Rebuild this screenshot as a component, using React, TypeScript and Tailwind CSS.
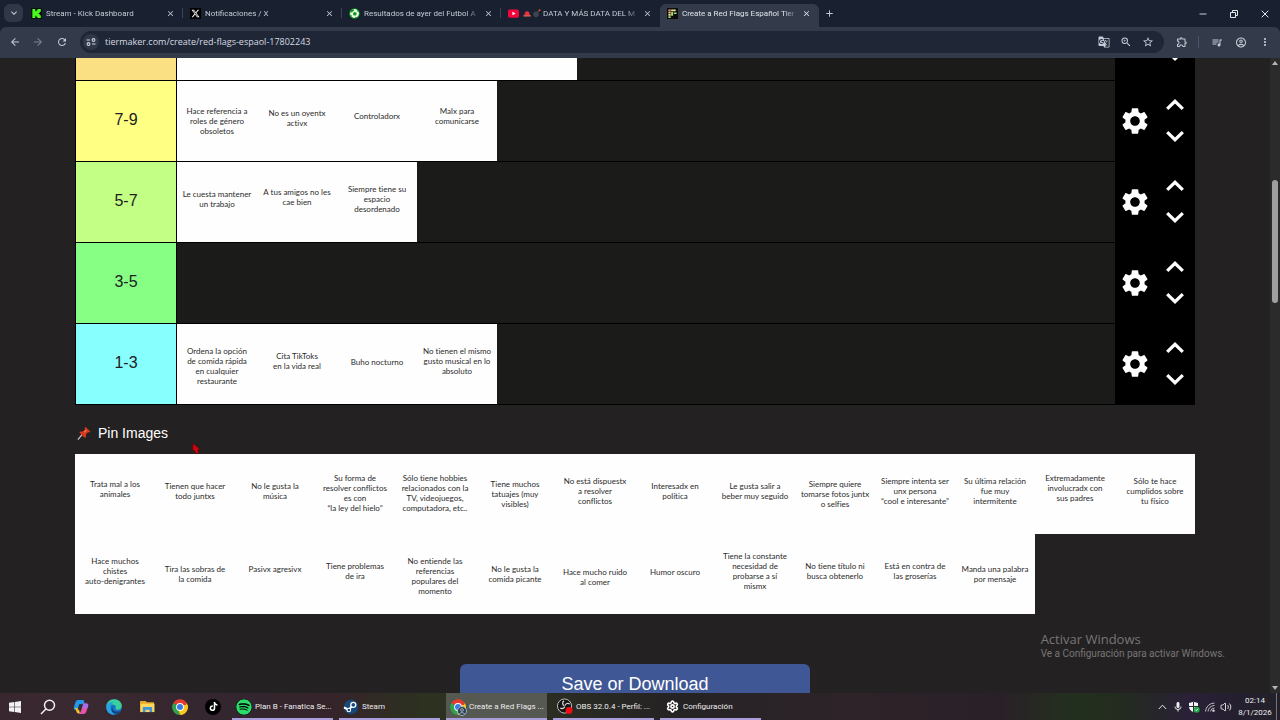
import type { ReactNode } from "react";
import {
  MdArrowBack,
  MdArrowForward,
  MdClose,
  MdGTranslate,
  MdKeyboardArrowDown,
  MdMic,
  MdMoreVert,
  MdOutlineAccountCircle,
  MdOutlineExtension,
  MdQueueMusic,
  MdRefresh,
  MdSettings,
  MdStarBorder,
  MdZoomIn,
  MdAdd,
} from "react-icons/md";
import { FaSpotify, FaTiktok, FaXTwitter } from "react-icons/fa6";
import { Settings, Volume2 } from "lucide-react";

const UI = "font-['Open_Sans','Noto_Sans',sans-serif]";
const UI_SMALL = "font-[Roboto,'Noto_Sans',sans-serif]";
const ARIAL = "font-['Liberation_Sans',Arial,sans-serif]";

/* Vertical start of the caption inside each 80px card. */
const START = {
  a: "pt-[17px]",
  b: "pt-[19px]",
  c: "pt-[22px]",
  d: "pt-[25px]",
  e: "pt-[27px]",
  f: "pt-[30px]",
  g: "pt-[33px]",
};

type Card = { lines: string[]; start: keyof typeof START };
type Tier = { label: string; color: string; cards: Card[] };

const card = (start: keyof typeof START, ...lines: string[]): Card => ({ start, lines });

const tiers: Tier[] = [
  { label: "", color: "bg-[#fbe083]", cards: [card("a"), card("a"), card("a"), card("a"), card("a")] },
  {
    label: "7-9",
    color: "bg-[#feff83]",
    cards: [
      card("d", "Hace referencia a", "roles de género", "obsoletos"),
      card("e", "No es un oyentx", "activx"),
      card("f", "Controladorx"),
      card("d", "Malx para", "comunicarse"),
    ],
  },
  {
    label: "5-7",
    color: "bg-[#c2ff84]",
    cards: [
      card("e", "Le cuesta mantener", "un trabajo"),
      card("d", "A tus amigos no les", "cae bien"),
      card("c", "Siempre tiene su", "espacio", "desordenado"),
    ],
  },
  { label: "3-5", color: "bg-[#86ff84]", cards: [] },
  {
    label: "1-3",
    color: "bg-[#88ffff]",
    cards: [
      card("c", "Ordena la opción", "de comida rápida", "en cualquier", "restaurante"),
      card("e", "Cita TikToks", "en la vida real"),
      card("g", "Buho nocturno"),
      card("c", "No tienen el mismo", "gusto musical en lo", "absoluto"),
    ],
  },
];

const pins: Card[] = [
  card("d", "Trata mal a los", "animales"),
  card("e", "Tienen que hacer", "todo juntxs"),
  card("e", "No le gusta la", "música"),
  card("b", "Su forma de", "resolver conflictos", "es con", "“la ley del hielo”"),
  card("b", "Sólo tiene hobbies", "relacionados con la", "TV, videojuegos,", "computadora, etc.."),
  card("d", "Tiene muchos", "tatuajes (muy", "visibles)"),
  card("c", "No está dispuestx", "a resolver", "conflictos"),
  card("e", "Interesadx en", "política"),
  card("e", "Le gusta salir a", "beber muy seguido"),
  card("d", "Siempre quiere", "tomarse fotos juntx", "o selfies"),
  card("c", "Siempre intenta ser", "unx persona", "“cool e interesante”"),
  card("c", "Su última relación", "fue muy", "intermitente"),
  card("b", "Extremadamente", "involucradx con", "sus padres"),
  card("c", "Sólo te hace", "cumplidos sobre", "tu físico"),
  card("c", "Hace muchos", "chistes", "auto-denigrantes"),
  card("f", "Tira las sobras de", "la comida"),
  card("f", "Pasivx agresivx"),
  card("e", "Tiene problemas", "de ira"),
  card("c", "No entiende las", "referencias", "populares del", "momento"),
  card("f", "No le gusta la", "comida picante"),
  card("g", "Hace mucho ruido", "al comer"),
  card("g", "Humor oscuro"),
  card("a", "Tiene la constante", "necesidad de", "probarse a sí", "mismx"),
  card("e", "No tiene título ni", "busca obtenerlo"),
  card("e", "Está en contra de", "las groserías"),
  card("f", "Manda una palabra", "por mensaje"),
];

function CardItem({ lines, start }: Card) {
  return (
    <li
      className={`h-20 w-20 shrink-0 bg-[#fefefe] text-center font-['Lato','Noto_Sans',sans-serif] text-[8px] leading-[10px] whitespace-nowrap text-[#2b2b2b] [font-variant-ligatures:none] ${START[start]}`}
    >
      {lines.map((l) => (
        <span key={l} className="block">
          {l}
        </span>
      ))}
    </li>
  );
}

function Chevron({ up }: { up?: boolean }) {
  return (
    <svg viewBox="0 0 18 11" className="h-[11px] w-[18px]" fill="none" stroke="#fff" strokeWidth="3.2">
      <path d={up ? "M1.2 9.8 9 2.3 16.8 9.8" : "M1.2 1.2 9 8.7 16.8 1.2"} />
    </svg>
  );
}

function TierRow({ label, color, cards }: Tier) {
  return (
    <section className="flex h-[81px] border-b border-l border-black bg-[#1b1b19]">
      <div className={`flex w-[101px] shrink-0 items-center justify-center border-r border-black pb-0.5 text-base text-[#202020] ${color}`}>
        {label}
      </div>
      <ul className="flex min-w-0 flex-1">
        {cards.map((c, i) => (
          <CardItem key={i} {...c} />
        ))}
      </ul>
      <div className="-mb-px flex w-20 shrink-0 bg-black pb-[3px]">
        <button aria-label="Ajustes de fila" className="flex w-10 items-center justify-center pt-0.5 text-white">
          <MdSettings className="size-8" />
        </button>
        <div className="flex w-10 flex-col items-center justify-center gap-[21px]">
          <button aria-label="Subir fila" className="flex">
            <Chevron up />
          </button>
          <button aria-label="Bajar fila" className="flex">
            <Chevron />
          </button>
        </div>
      </div>
    </section>
  );
}

const KickIcon = () => (
  <svg viewBox="0 0 12 12" className="size-[11px] shrink-0">
    <rect width="12" height="12" rx="1" fill="#0b0f0b" />
    <path fill="#4bfb1e" d="M1.5 1h3.2v2.6h1.2V2.4h1.2V1h3.6v3.1H9.5v1.3H8.3v1.2h1.2v1.3h1.2V11H7.1V9.7H5.900V8.400H4.700V11H1.500z" />
  </svg>
);
const XIcon = () => (
  <span className="flex size-[11px] shrink-0 items-center justify-center bg-black text-white">
    <FaXTwitter className="size-[9px]" />
  </span>
);
const FootballIcon = () => (
  <svg viewBox="0 0 12 12" className="size-[11px] shrink-0">
    <circle cx="6" cy="6" r="5.800" fill="#0d8f1e" />
    <circle cx="6" cy="6" r="4.800" fill="#eefbe9" />
    <path fill="#0f9a22" d="m6.400 4.200 2.200 1.600-.9 2.500H5l-.8-2.500zM2 2.500 5 1l.6 1.800L3.500 4.600 1.200 5zM8.500 1.300l2.500 2-1.800.7zM.8 7.500l1.800.2L3.500 10zM6 11.200 7 9.600l2 .4z" />
  </svg>
);
const YoutubeIcon = () => (
  <svg viewBox="0 0 12 12" className="size-[11px] shrink-0">
    <rect y="1.500" width="12" height="9" rx="2" fill="#f5053c" />
    <path d="m4.800 4 3.600 2-3.600 2z" fill="#fff" />
  </svg>
);
const TierIcon = () => (
  <svg viewBox="0 0 12 12" className="size-[11px] shrink-0">
    <rect width="12" height="12" fill="#0c0c0a" />
    <path fill="#e88a7c" d="M1.500 1.500H4v2H1.500z" />
    <path fill="#f0c878" d="M1.500 4H4v2H1.500z" />
    <path fill="#e9e58a" d="M1.500 6.500H4v2H1.500zM4.500 1.500h5v2h-5z" />
    <path fill="#a6d97c" d="M1.500 9H4v1.800H1.500zM4.500 4.300h2.200v4.200H4.500zM7.500 5h3v1.500h-3z" />
  </svg>
);

function Emojis() {
  return (
    <svg viewBox="0 0 19 9" className="mr-px inline-block h-[9px] w-[19px]">
      <path d="M1.500 6a2.600 3.800 0 0 1 5.200 0z" fill="#e8313c" />
      <path d="M.5 6h7.200v1.600H.5z" fill="#d8574f" />
      <circle cx="13" cy="5.200" r="2.800" fill="#3d4450" />
      <path d="m14.500 3.200 1.600-1.800" stroke="#9b5c3c" strokeWidth="1" />
      <circle cx="16.600" cy="1.300" r="1" fill="#e2552f" />
    </svg>
  );
}

type Tab = { title: string; icon: ReactNode; lead?: ReactNode; active?: boolean; divider?: boolean };
const tabs: Tab[] = [
  { title: "Stream - Kick Dashboard", icon: <KickIcon />, divider: true },
  { title: "Notificaciones / X", icon: <XIcon />, divider: true },
  { title: "Resultados de ayer del Futbol A", icon: <FootballIcon />, divider: true },
  { title: "DATA Y MÁS DATA DEL M", icon: <YoutubeIcon />, lead: <Emojis /> },
  { title: "Create a Red Flags Español Tier", icon: <TierIcon />, active: true },
];

function BrowserChrome() {
  return (
    <header className={`shrink-0 bg-[#19202f] text-[#c5cbd6] ${UI}`}>
      <div className="flex h-[27px] pl-1">
        <button aria-label="Buscar pestañas" className="mt-1 flex h-[18px] w-[19px] shrink-0 items-center justify-center rounded-md bg-[#303847]">
          <MdKeyboardArrowDown className="size-3" />
        </button>
        <nav className={`ml-px flex min-w-0 ${UI_SMALL}`} aria-label="Pestañas">
          {tabs.map((t) => (
            <div key={t.title} className="flex w-[159px] items-end">
              <div
                className={`relative flex h-[23px] w-full items-center pr-2 pb-1 pl-[7px] ${t.active ? "rounded-t-md bg-[#333b4a] text-[#dfe3ea]" : ""}`}
              >
                {t.icon}
                <a
                  href="#tab"
                  className="ml-1 h-4 min-w-0 flex-1 overflow-hidden text-[8px] leading-4 whitespace-nowrap [mask-image:linear-gradient(to_right,black_88%,transparent)]"
                >
                  {t.lead}
                  {t.title}
                </a>
                <button aria-label="Cerrar pestaña" className="ml-1 shrink-0">
                  <MdClose className="size-[9px]" />
                </button>
                {t.divider && <span className="absolute top-1 right-0 h-2.5 w-px bg-[#3a4356]" />}
              </div>
            </div>
          ))}
        </nav>
        <button aria-label="Nueva pestaña" className="ml-0.5 flex w-4 items-center justify-center">
          <MdAdd className="size-[11px]" />
        </button>
        <div className="ml-auto flex items-center">
          <button aria-label="Minimizar" className="flex h-full w-[31px] items-center justify-center">
            <svg viewBox="0 0 8 8" className="size-2" stroke="#c9ced8">
              <path d="M.5 4h7" />
            </svg>
          </button>
          <button aria-label="Restaurar" className="flex h-full w-[31px] items-center justify-center">
            <svg viewBox="0 0 8 8" className="size-2" fill="none" stroke="#e2e6ee">
              <path d="M.5 2.500h5v5h-5zM2.500 2V.5h5v5H6" />
            </svg>
          </button>
          <button aria-label="Cerrar" className="flex h-full w-[31px] items-center justify-center">
            <svg viewBox="0 0 8 8" className="size-2" stroke="#e2e6ee">
              <path d="m.7.7 6.600 6.600M7.300.7.7 7.300" />
            </svg>
          </button>
        </div>
      </div>
      <div className="flex h-[31px] items-center rounded-t-md bg-[#333b4a] pr-[9px] pb-px pl-2">
        <button aria-label="Atrás" className="flex w-[14px] justify-center">
          <MdArrowBack className="size-3" />
        </button>
        <button aria-label="Adelante" className="ml-[9px] flex w-[14px] justify-center text-[#7b8494]">
          <MdArrowForward className="size-3" />
        </button>
        <button aria-label="Recargar" className="ml-[10px] flex w-[14px] justify-center">
          <MdRefresh className="size-3" />
        </button>
        <div className="ml-[11px] flex h-[22px] flex-1 items-center gap-1.5 rounded-full bg-[#1f2736] pr-2.5 pl-[3px]">
          <button aria-label="Información del sitio" className="flex size-4 items-center justify-center rounded-full bg-[#303847]">
            <svg viewBox="0 0 10 8" className="h-2 w-[10px]" fill="none" stroke="#cdd3dd" strokeWidth="1.100">
              <path d="M.5 2H4M6 6h3.500" />
              <circle cx="7.500" cy="2" r="1.400" />
              <circle cx="2.500" cy="6" r="1.400" />
            </svg>
          </button>
          <input
            aria-label="Dirección"
            defaultValue="tiermaker.com/create/red-flags-espaol-17802243"
            className="min-w-0 flex-1 bg-transparent text-[9px] leading-4 text-[#d5dae3] outline-none"
          />
          <div className="flex items-center gap-[10px]">
            <button aria-label="Traducir">
              <MdGTranslate className="size-3" />
            </button>
            <button aria-label="Zoom">
              <MdZoomIn className="size-3" />
            </button>
            <button aria-label="Marcador">
              <MdStarBorder className="size-3" />
            </button>
          </div>
        </div>
        <button aria-label="Extensiones" className="ml-3 flex w-3 justify-center">
          <MdOutlineExtension className="size-3" />
        </button>
        <span className="ml-[10px] h-3 w-px bg-[#4c5569]" />
        <button aria-label="Multimedia" className="ml-3 flex w-3 justify-center">
          <MdQueueMusic className="size-[13px]" />
        </button>
        <button aria-label="Perfil" className="ml-3 flex w-3 justify-center">
          <MdOutlineAccountCircle className="size-[13px]" />
        </button>
        <button aria-label="Menú" className="ml-3 flex w-3 justify-center">
          <MdMoreVert className="size-3" />
        </button>
      </div>
    </header>
  );
}

const PinIcon = () => (
  <svg viewBox="0 0 16 16" className="size-[14px]">
    <path d="M1 15.500 6.500 9" stroke="#c9c9c9" strokeWidth="1.400" />
    <path fill="#d8381e" d="M9.500.8 15.300 6.300 14 7.500l-1.500-.3-2.300 2.600.2 2.600-1.400 1.200L2.700 7.500 4 6.200l2.700.2 2.500-2.300-.6-1.900z" />
    <path fill="#f4704f" d="m7.500 6.600 2.600-2.500 1.200 1-2.500 2.700z" />
  </svg>
);

const WindowsIcon = () => (
  <svg viewBox="0 0 12 12" className="size-3" fill="#f2f2f2">
    <path d="M0 1.800 5.200 1v4.700H0zM5.800.9 12 0v5.700H5.800zM0 6.300h5.200V11L0 10.200zM5.800 6.300H12V12l-6.200-.9z" />
  </svg>
);
const SearchIcon = () => (
  <svg viewBox="0 0 16 16" className="size-4" fill="none" stroke="#f2f2f2" strokeWidth="1.500">
    <circle cx="9.500" cy="6.300" r="5" />
    <path d="M5.900 10 1 15" />
  </svg>
);
const CopilotIcon = () => (
  <svg viewBox="0 0 16 16" className="size-4">
    <path d="M5 1h5.500l1.200 3-3 1.500L6.500 11H2.500C.8 11 .5 9.500 1 8l1.600-5C3 1.700 3.800 1 5 1z" fill="#2398e8" />
    <path d="M2 9h3.600L7 14.500H5.500C4 14.500 3.500 13 3 11z" fill="#f2c32c" />
    <path d="M10.500 4.500h3c1.700 0 2 1.500 1.500 3l-1.600 5c-.4 1.600-1.300 2.500-2.900 2.500H6l2-3z" fill="#e455a8" />
    <path d="M10.500 4.500h3c1.500 0 2 1.200 1.600 2.700L14.500 9H9.200z" fill="#a66cf0" />
    <path d="m6.500 5 2.500.2L7 11l-2.500-.6z" fill="#332833" />
  </svg>
);
const EdgeIcon = () => (
  <svg viewBox="0 0 16 16" className="size-4">
    <circle cx="8" cy="8" r="7.800" fill="#1673c8" />
    <path d="M.3 7.500C.6 3 4 .2 8.200.2c4.500 0 7.600 3.300 7.600 6.500 0 2.600-2 4-4.200 4-1.600 0-2.300-.6-2.200-1.200.8-1 .6-3.400-2-3.800C4.500 5.300 1.500 6 .3 7.500z" fill="#3bcf9a" />
    <path d="M.3 7.500C1.500 2.500 6 2.300 8.500 3.600 6 4 4.500 6 4.600 8.800c.1 3 2.400 5.800 4.400 6.800C3.500 16.500-.2 12 .3 7.500z" fill="#26a4e0" />
    <path d="M6.500 8c-1 3.500 2.500 5.500 8 4-2.200 3.500-6.500 3-8 1C5 11.500 5.300 9 6.500 8z" fill="#133f7c" />
  </svg>
);
const FolderIcon = () => (
  <svg viewBox="0 0 16 14" className="h-[13px] w-[15px]">
    <path d="M0 1h6l1.300 1.500H15V13H0z" fill="#e8a92c" />
    <path d="M.5 4h15v9H.5z" fill="#fbd75e" />
    <path d="M3 13V7.500h10V13h-2.800v-2.500H5.800V13z" fill="#3f93d8" />
  </svg>
);
function ChromeIcon() {
  return (
    <svg viewBox="0 0 16 16" className="size-4">
      <path d="M8 8 1.240 4.100A7.800 7.800 0 0 1 14.760 4.100z" fill="#e33b2e" />
      <path d="M8 8h-.1L1.240 4.100A7.800 7.800 0 0 0 8 15.800z" fill="#2fa24c" />
      <path d="M8 8 14.760 4.100A7.800 7.800 0 0 1 8 15.800L6.500 11z" fill="#fbc91c" />
      <path d="M8 4.100h6.760L13 8H8z" fill="#e33b2e" />
      <path d="M11.400 6h4.100A7.800 7.800 0 0 1 8 15.800L11.400 10z" fill="#fbc91c" />
      <circle cx="8" cy="8" r="3.900" fill="#fff" />
      <circle cx="8" cy="8" r="3" fill="#3b7de8" />
    </svg>
  );
}
const ChromeProfileIcon = () => (
  <span className="relative flex">
    <ChromeIcon />
    <svg viewBox="0 0 10 10" className="absolute -right-px -bottom-px size-[10px]">
      <circle cx="5" cy="5" r="4.500" fill="#2c3f52" stroke="#b8c9d8" strokeWidth=".8" />
      <circle cx="5" cy="4" r="1.400" fill="none" stroke="#b8c9d8" strokeWidth=".8" />
      <path d="M2.500 7.500q2.500-2 5 0" fill="none" stroke="#b8c9d8" strokeWidth=".8" />
    </svg>
  </span>
);
const TiktokIcon = () => (
  <span className="flex size-4 items-center justify-center rounded-full bg-black text-white">
    <FaTiktok className="size-[9px]" />
  </span>
);
const SpotifyIcon = () => (
  <span className="flex size-4 items-center justify-center rounded-full text-[#2bdc6a]">
    <FaSpotify className="size-4 rounded-full bg-black" />
  </span>
);
const SteamIcon = () => (
  <svg viewBox="0 0 16 16" className="size-4">
    <circle cx="8" cy="8" r="7.200" fill="#17497c" />
    <path d="M1 8.500 6 10.800l2.600-3.400" stroke="#fff" strokeWidth="2" fill="none" />
    <circle cx="10.300" cy="5.800" r="2.500" fill="#17497c" stroke="#fff" strokeWidth="1.300" />
    <circle cx="5.800" cy="11" r="1.800" fill="#17497c" stroke="#fff" strokeWidth="1.100" />
  </svg>
);
const ObsIcon = () => (
  <svg viewBox="0 0 17 17" className="size-[17px]">
    <circle cx="8" cy="8" r="7.500" fill="#151515" stroke="#d8d8d8" strokeWidth=".9" />
    <path d="M7.500 2.500a3 3 0 0 0 0 5.200M3.500 10a3 3 0 0 0 4.700-1.500M13.500 6a3 3 0 0 0-5 1.500" fill="none" stroke="#d8d8d8" strokeWidth="1.300" />
    <circle cx="12.800" cy="12.800" r="3.700" fill="#f00d12" />
  </svg>
);

const launchers = [
  { name: "Inicio", icon: <WindowsIcon /> },
  { name: "Buscar", icon: <SearchIcon /> },
  { name: "Copilot", icon: <CopilotIcon /> },
  { name: "Edge", icon: <EdgeIcon /> },
  { name: "Explorador", icon: <FolderIcon /> },
  { name: "Chrome", icon: <ChromeIcon /> },
  { name: "TikTok", icon: <TiktokIcon /> },
];

const windows = [
  { title: "Plan B - Fanatica Se...", icon: <SpotifyIcon /> },
  { title: "Steam", icon: <SteamIcon /> },
  { title: "Create a Red Flags ...", icon: <ChromeProfileIcon />, active: true },
  { title: "OBS 32.0.4 - Perfil: ...", icon: <ObsIcon /> },
  { title: "Configuración", icon: <Settings className="size-[13px] text-white" strokeWidth={3} /> },
];

function Taskbar() {
  return (
    <footer
      className={`flex h-[27px] shrink-0 bg-[linear-gradient(to_right,#38272e_0%,#3a2930_6%,#33262f_18%,#35242a_26%,#2c3120_33%,#2c2e22_42%,#252324_52%,#2d2329_66%,#2a2027_78%,#23301e_84%,#232a20_88%,#2a2038_93%,#251f30_96%,#222129_100%)] text-[#ededed] ${UI_SMALL}`}
    >
      <div className="flex">
        {launchers.map((l) => (
          <button key={l.name} aria-label={l.name} className="flex w-[33px] items-center justify-center pr-[3px]">
            {l.icon}
          </button>
        ))}
      </div>
      <div className="ml-px flex gap-1.5">
        {windows.map((w) => (
          <button
            key={w.title}
            className={`flex w-[101px] items-center gap-[3px] border-b-2 border-[#a99ddb] pt-0.5 pl-1 text-[8px] whitespace-nowrap ${w.active ? "bg-[#565852]" : ""}`}
          >
            <span className="flex w-4 shrink-0 justify-center">{w.icon}</span>
            {w.title}
          </button>
        ))}
      </div>
      <div className="ml-auto flex items-center gap-1 pr-[3px]">
        <button aria-label="Iconos ocultos" className="flex w-3 justify-center">
          <svg viewBox="0 0 9 6" className="h-1.5 w-[9px]" fill="none" stroke="#eee">
            <path d="M.8 5 4.500 1.200 8.200 5" />
          </svg>
        </button>
        <MdMic className="size-3" />
        <svg viewBox="0 0 12 12" className="size-3">
          <path d="M5.500.8 10 2v3.500c0 3-2 4.700-4.500 5.700C3 10.200 1 8.500 1 5.500V2z" fill="#f4f4f4" />
          <path d="M5.500 1v10M1 5.500h9" stroke="#2b2731" />
          <circle cx="8.700" cy="8.700" r="3" fill="#1fa84a" />
          <path d="m7.300 8.700 1 1 1.800-2" stroke="#fff" fill="none" strokeWidth=".8" />
        </svg>
        <svg viewBox="0 0 12 12" className="size-3" fill="none" stroke="#bbb" strokeWidth="1">
          <path d="M1.500 10.500A9 9 0 0 1 10.500 2M4 10.500A6.500 6.500 0 0 1 10.500 4.500M6.500 10.500a4 4 0 0 1 4-3.500" />
          <circle cx="9.500" cy="9.700" r=".9" fill="#eee" />
        </svg>
        <Volume2 className="size-3" strokeWidth={1.8} />
        <div className="ml-0.5 w-[34px] text-center text-[8px] leading-3 whitespace-nowrap">
          <div>02:14</div>
          <div>8/1/2026</div>
        </div>
        <span className="h-full w-px bg-[#77727b]" />
      </div>
    </footer>
  );
}

export default function App() {
  return (
    <div className="flex h-screen flex-col overflow-hidden bg-[#232122]">
      <BrowserChrome />
      <div className="relative flex min-h-0 flex-1">
        <main className={`min-w-0 flex-1 overflow-hidden px-[75px] ${ARIAL}`}>
          <div className="-mt-[58px]">
            {tiers.map((t, i) => (
              <TierRow key={i} {...t} />
            ))}
          </div>
          <h2 className="flex h-[49px] items-center gap-[7px] pt-1.5 pl-0.5 text-sm text-white">
            <PinIcon />
            Pin Images
          </h2>
          <ul className="flex flex-wrap">
            {pins.map((c, i) => (
              <CardItem key={i} {...c} />
            ))}
          </ul>
          <div className="mt-[50px] flex justify-center">
            <button className="h-10 w-[350px] rounded-md bg-[#405795] text-lg text-white">Save or Download</button>
          </div>
        </main>
        <div className="flex w-2.5 shrink-0 flex-col items-center bg-[#2b2b2b] py-[3px]">
          <svg viewBox="0 0 6 4" className="h-1 w-1.5" fill="#b5b5b5">
            <path d="M0 4 3 0l3 4z" />
          </svg>
          <div className="flex w-full flex-1 flex-col items-center">
            <div className="grow-[115]" />
            <div className="w-1.5 grow-[123] rounded-full bg-[#a0a0a0]" />
            <div className="grow-[383]" />
          </div>
          <svg viewBox="0 0 6 4" className="h-1 w-1.5" fill="#b5b5b5">
            <path d="M0 0h6L3 4z" />
          </svg>
        </div>
        <div className="pointer-events-none absolute right-[55px] bottom-8 text-[#787677]">
          <div className={`text-[13px] leading-4 ${UI}`}>Activar Windows</div>
          <div className={`text-[10px] leading-[14px] ${UI_SMALL}`}>Ve a Configuración para activar Windows.</div>
        </div>
        <svg viewBox="0 0 8 11" className="absolute top-[385px] left-[192px] h-[11px] w-2">
          <path d="M1 .5 7.500 6 5.500 7l1.300 3L4 10.500 3 8 .8 7z" fill="#d0060c" stroke="#700" strokeWidth=".6" />
        </svg>
      </div>
      <Taskbar />
    </div>
  );
}
